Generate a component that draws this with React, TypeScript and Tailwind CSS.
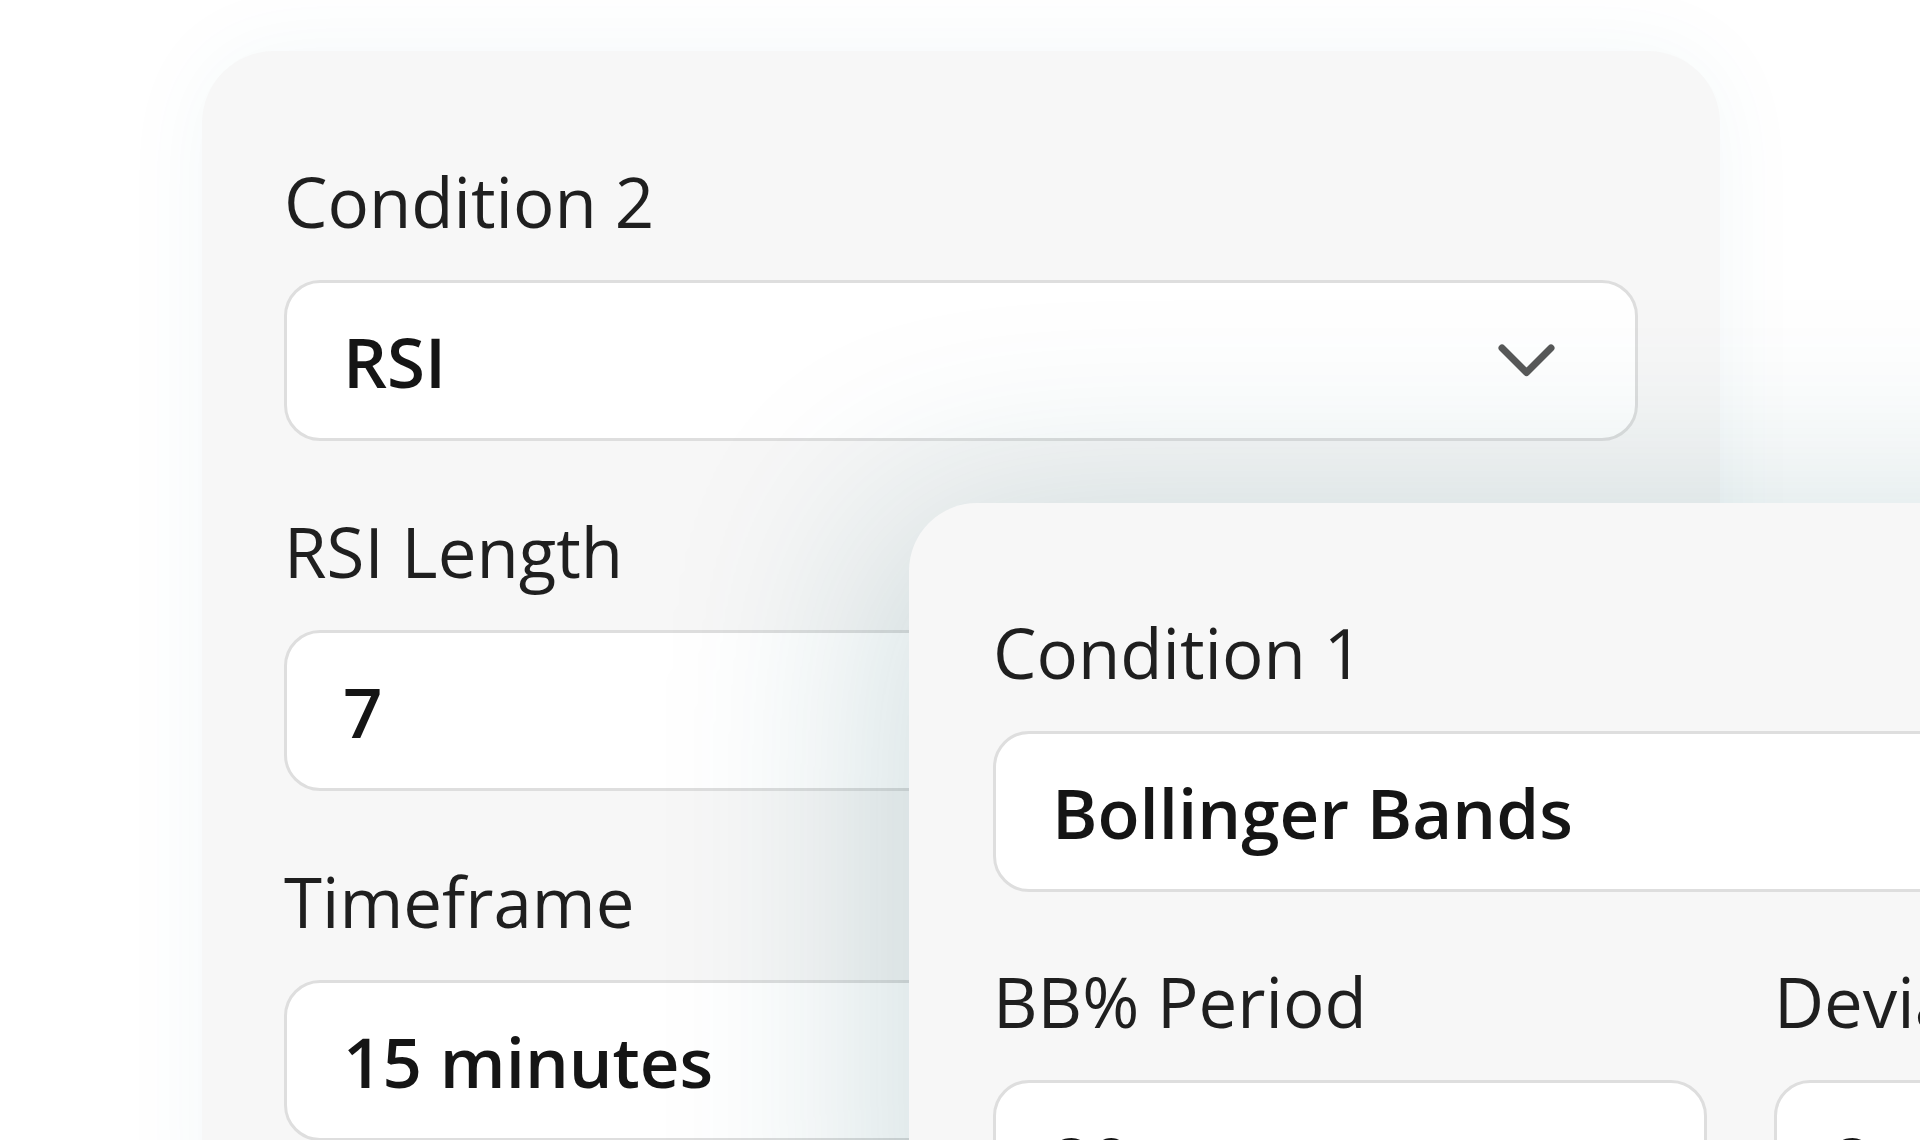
import React from "react"

function Chevron() {
  return (
    <svg width="57" height="33" viewBox="0 0 57 33" fill="none" className="shrink-0">
      <path d="M4 4 L28.5 28.5 L53 4" stroke="#585858" strokeWidth="7" strokeLinecap="round" strokeLinejoin="round" />
    </svg>
  )
}

function Field({ label, value, chevron = false }: { label: string; value: string; chevron?: boolean }) {
  return (
    <div>
      <div className="text-[69px] leading-[72px] text-[#1f1f1f] whitespace-nowrap">{label}</div>
      <div className="mt-[43px] h-[161px] rounded-[36px] border-[3px] border-[#dedede] bg-white flex items-center justify-between pl-[56px] pr-[80px]">
        <span className="text-[69px] leading-[72px] font-semibold text-[#151515] whitespace-nowrap">{value}</span>
        {chevron && <Chevron />}
      </div>
    </div>
  )
}

function App() {
  return (
    <div className="relative h-[1140px] w-full overflow-hidden bg-white font-['Open_Sans',sans-serif]">
      {/* back card */}
      <div className="ml-[202px] mt-[51px] w-[1518px] rounded-[72px] bg-[#f7f7f7] px-[82px] pt-[114px] pb-[120px] shadow-[0_0_90px_rgba(20,120,130,0.05)] flex flex-col gap-[74px]">
        <Field label="Condition 2" value="RSI" chevron />
        <Field label="RSI Length" value="7" />
        <Field label="Timeframe" value="15 minutes" chevron />
      </div>

      {/* front card */}
      <div className="absolute left-[909px] top-[503px] w-[1663px] rounded-[68px] bg-[#f7f7f7] px-[84px] pt-[113px] pb-[120px] shadow-[-30px_10px_220px_rgba(20,90,100,0.2)]">
        <Field label="Condition 1" value="Bollinger Bands" chevron />
        <div className="mt-[73px] grid grid-cols-2 gap-x-[67px]">
          <Field label="BB% Period" value="20" />
          <Field label="Deviation" value="2" />
        </div>
      </div>
    </div>
  )
}

export default App
